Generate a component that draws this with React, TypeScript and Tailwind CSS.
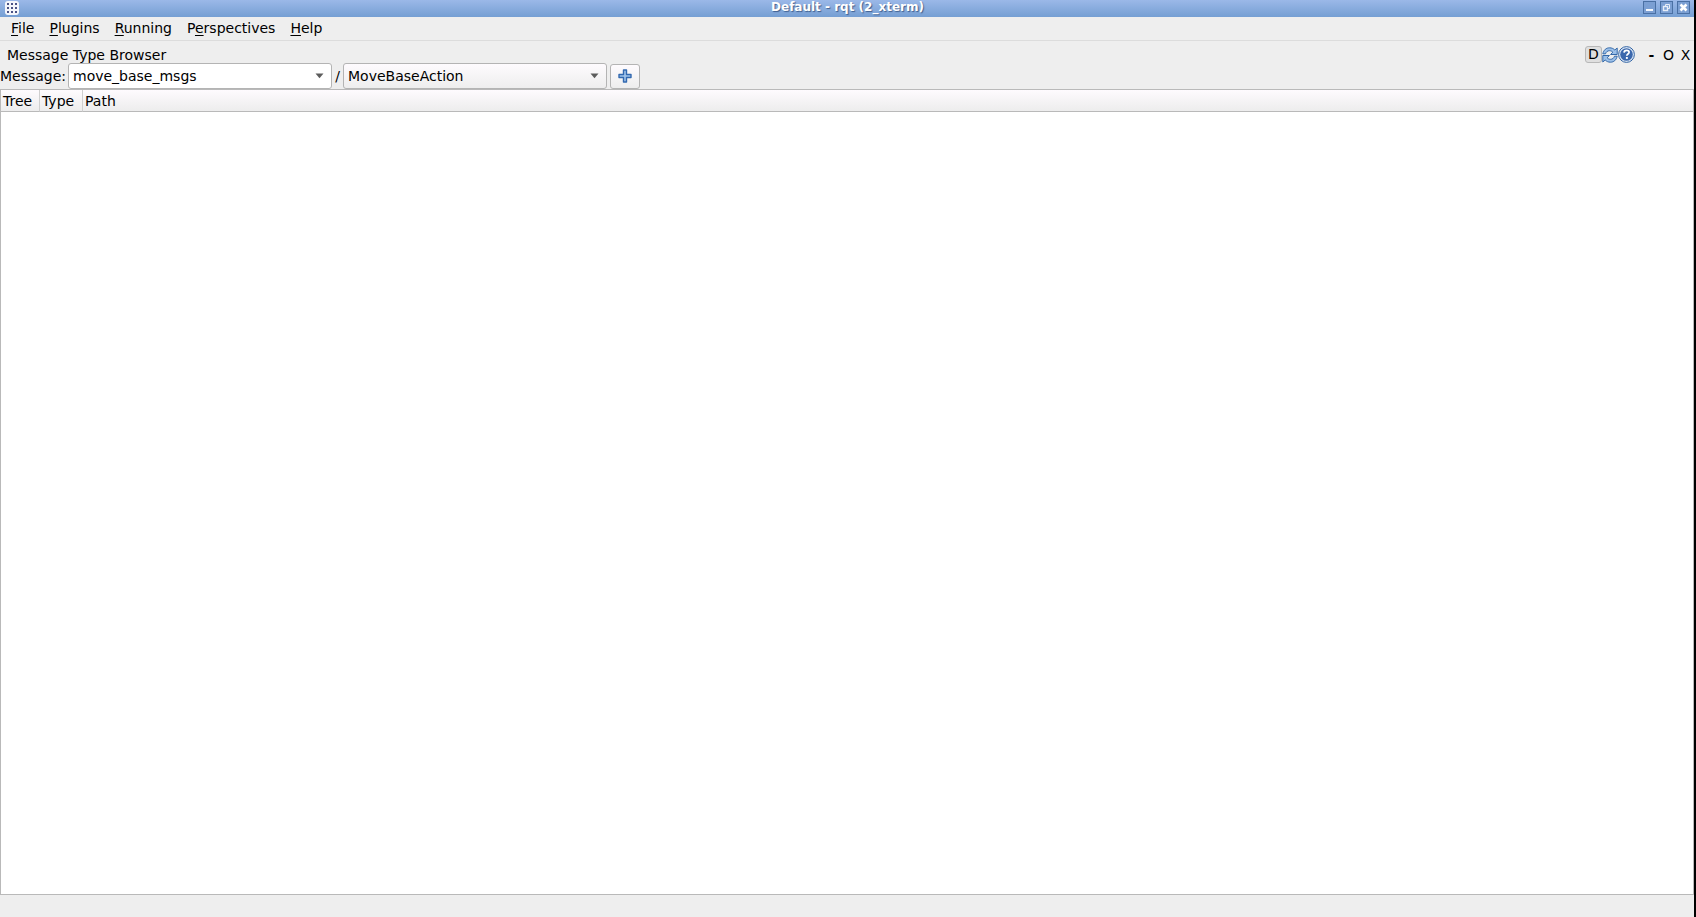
import { useState } from 'react'

const MENUS = [
  { before: '', key: 'F', after: 'ile' },
  { before: '', key: 'P', after: 'lugins' },
  { before: '', key: 'R', after: 'unning' },
  { before: 'P', key: 'e', after: 'rspectives' },
  { before: '', key: 'H', after: 'elp' }
]

function AppIcon() {
  return (
    <svg width="14" height="14" viewBox="0 0 14 14" aria-hidden="true">
      <rect width="14" height="14" rx="3" fill="#f4f6fb" />
      {[2, 6, 10].map((y) =>
        [2, 6, 10].map((x) => (
          <rect key={`${x}-${y}`} x={x} y={y} width="2" height="2" fill="#4a5285" />
        ))
      )}
    </svg>
  )
}

function MinimizeIcon() {
  return (
    <svg width="11" height="11" viewBox="0 0 11 11" aria-hidden="true">
      <rect x="2" y="7" width="7" height="2" fill="#f4f7fc" />
    </svg>
  )
}

function RestoreIcon() {
  return (
    <svg width="11" height="11" viewBox="0 0 11 11" fill="none" stroke="#e6edf8" aria-hidden="true">
      <path d="M4.5 4V2.5h4v4H7" />
      <rect x="2.5" y="4.5" width="4" height="4" strokeWidth="1.4" />
    </svg>
  )
}

function CloseIcon() {
  return (
    <svg width="11" height="11" viewBox="0 0 11 11" aria-hidden="true">
      <path d="M2.5 2.5l6 6M8.5 2.5l-6 6" stroke="#fff" strokeWidth="2.6" />
    </svg>
  )
}

function RefreshIcon() {
  return (
    <svg width="16" height="16" viewBox="0 0 16 16" fill="#9cc0e8" stroke="#3468a8" strokeWidth="1" strokeLinejoin="round" aria-hidden="true">
      <path d="M0.8 6.8C1.8 2.8 4.2 0.8 7.6 0.8c2.1 0 3.9.8 5.2 2.2L15.2 1v6.5H8.6l2.2-2.3C9.9 4.2 8.8 3.7 7.5 3.7 5.6 3.7 4.3 4.7 3.5 6.8z" />
      <path d="M15.2 9.2c-1 4-3.4 6-6.8 6-2.1 0-3.9-.8-5.2-2.2L0.8 15V8.5h6.6l-2.2 2.3c.9 1 2 1.5 3.3 1.5 1.9 0 3.2-1 4-3.1z" />
    </svg>
  )
}

function HelpIcon() {
  return (
    <svg width="17" height="17" viewBox="0 0 17 17" aria-hidden="true">
      <circle cx="8.5" cy="8.5" r="7.9" fill="#dce7f5" stroke="#3465a4" strokeWidth="1" />
      <circle cx="8.5" cy="8.5" r="6.3" fill="#3b68ad" />
      <path d="M6 6.6C6.1 5.1 7.1 4.3 8.6 4.3c1.5 0 2.5.8 2.5 2 0 1.7-2.3 1.7-2.3 3.5" fill="none" stroke="#fff" strokeWidth="1.7" />
      <rect x="7.9" y="11" width="1.9" height="1.9" fill="#fff" />
    </svg>
  )
}

function PlusIcon() {
  return (
    <svg width="14" height="14" viewBox="0 0 14 14" aria-hidden="true">
      <path d="M5.5 1h3v4.5H13v3H8.5V13h-3V8.5H1v-3h4.5z" fill="#9dc0e9" stroke="#3268b0" strokeWidth="1.4" strokeLinejoin="round" />
    </svg>
  )
}

function TitleButton({ label, children }: { label: string; children: React.ReactNode }) {
  return (
    <button
      type="button"
      aria-label={label}
      className="flex h-[13px] w-[13px] items-center justify-center border border-[#4a70a4] bg-[#7b9fd3]"
    >
      {children}
    </button>
  )
}

type ComboProps = {
  id: string
  label?: string
  value: string
  options: string[]
  onChange: (value: string) => void
  className: string
}

function Combo({ id, label, value, options, onChange, className }: ComboProps) {
  return (
    <div className="relative w-[264px]">
      <select
        id={id}
        aria-label={label}
        value={value}
        onChange={(e) => onChange(e.target.value)}
        className={`block h-[26px] w-full appearance-none rounded-[3px] border border-[#b4b4b4] pr-6 pl-1 text-sm text-black outline-none ${className}`}
      >
        {options.map((option) => (
          <option key={option}>{option}</option>
        ))}
      </select>
      <svg className="pointer-events-none absolute top-[10px] right-2 h-[6px] w-[9px]" viewBox="0 0 9 6" aria-hidden="true">
        <path d="M0.5 0.5h8L4.5 5.2z" fill="#5c5c5c" />
      </svg>
    </div>
  )
}

export default function App() {
  const [pkg, setPkg] = useState('move_base_msgs')
  const [message, setMessage] = useState('MoveBaseAction')

  return (
    <div className="flex min-h-screen flex-col border-r-2 border-black bg-[#eeeeee] font-['DejaVu_Sans',sans-serif] text-sm leading-4 text-black">
      <header className="flex h-[17px] items-start bg-linear-to-b from-[#9bb8e8] to-[#759fd3] pt-px pr-1 pl-[5px]">
        <div className="flex flex-1">
          <AppIcon />
        </div>
        <h1 className="text-xs leading-3 font-bold text-white [text-shadow:1px_1px_1px_#3f5f8f]">
          Default - rqt (2_xterm)
        </h1>
        <div className="flex flex-1 justify-end gap-1">
          <TitleButton label="Minimize">
            <MinimizeIcon />
          </TitleButton>
          <TitleButton label="Restore">
            <RestoreIcon />
          </TitleButton>
          <TitleButton label="Close">
            <CloseIcon />
          </TitleButton>
        </div>
      </header>

      <nav className="flex h-6 items-center gap-px border-b border-[#dcdcdc] pb-px pl-1">
        {MENUS.map((menu) => (
          <button key={menu.before + menu.key + menu.after} type="button" className="px-[7px]">
            {menu.before}
            <span className="underline underline-offset-2">{menu.key}</span>
            {menu.after}
          </button>
        ))}
      </nav>

      <main className="flex flex-1 flex-col">
        <div className="flex h-[22px] items-end justify-between pl-[7px]">
          <h2>Message Type Browser</h2>
          <div className="flex items-center">
            <button type="button" className="h-[17px] w-[17px] rounded-[3px] border border-[#b8b8b8] bg-[#dfdfdf] leading-[15px]">
              D
            </button>
            <button type="button" aria-label="Reload">
              <RefreshIcon />
            </button>
            <button type="button" aria-label="Help" className="mr-2">
              <HelpIcon />
            </button>
            <button type="button" className="w-[17px] font-bold">-</button>
            <button type="button" className="w-[17px]">O</button>
            <button type="button" className="w-[17px]">X</button>
          </div>
        </div>

        <div className="flex h-[26px] items-center">
          <label htmlFor="package" className="w-[68px]">
            Message:
          </label>
          <Combo
            id="package"
            value={pkg}
            options={['move_base_msgs', 'std_msgs']}
            onChange={setPkg}
            className="bg-white"
          />
          <span className="w-[11px] text-center">/</span>
          <Combo
            id="message"
            label="Message type"
            value={message}
            options={['MoveBaseAction', 'MoveBaseGoal']}
            onChange={setMessage}
            className="bg-linear-to-b from-[#fefbfe] to-[#eeeeee]"
          />
          <button
            type="button"
            aria-label="Add message"
            className="ml-[3px] flex h-[25px] w-[30px] items-center justify-center rounded-[3px] border border-[#b4b4b4] bg-linear-to-b from-[#fefbfe] to-[#eeeeee]"
          >
            <PlusIcon />
          </button>
        </div>

        <div className="flex-1 border border-[#b9b9b9] bg-white">
          <table className="w-full table-fixed border-separate border-spacing-0">
            <thead>
              <tr className="bg-linear-to-b from-[#fefbfe] to-[#ececec] text-left">
                <th className="h-[22px] w-[39px] border-r border-b border-r-[#cfcfcf] border-b-[#b9b9b9] pl-[2px] py-0 font-normal">Tree</th>
                <th className="w-[43px] border-r border-b border-r-[#cfcfcf] border-b-[#b9b9b9] pl-[2px] py-0 font-normal">Type</th>
                <th className="border-b border-b-[#b9b9b9] pl-[2px] py-0 font-normal">Path</th>
              </tr>
            </thead>
            <tbody />
          </table>
        </div>
      </main>

      <footer className="h-[22px]" />
    </div>
  )
}
